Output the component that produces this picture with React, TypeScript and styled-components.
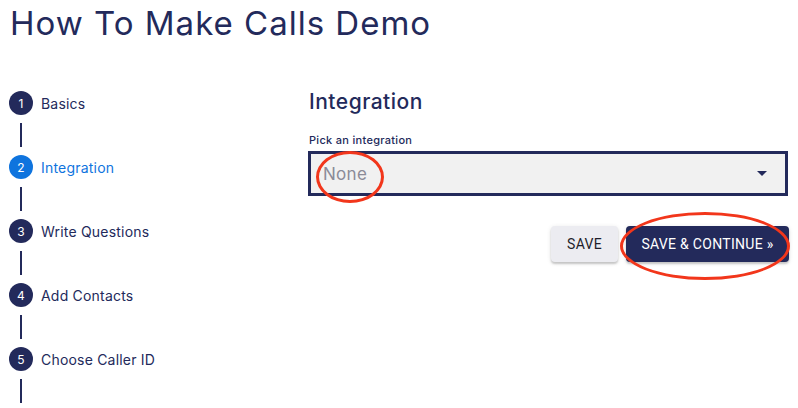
import React from 'react';
import styled, { createGlobalStyle } from 'styled-components';

const navy = '#232a5b';
const blue = '#0f74de';
const annotation = '#f2361b';

const GlobalStyle = createGlobalStyle`
  body {
    margin: 0;
    background: #fff;
    font-family: Inter, "DejaVu Sans", sans-serif;
    color: ${navy};
  }
`;

const steps = ['Basics', 'Integration', 'Write Questions', 'Add Contacts', 'Choose Caller ID'];

export default function App() {
  return (
    <Page>
      <GlobalStyle />
      <Title>How To Make Calls Demo</Title>
      <Body>
        <Stepper>
          {steps.map((label, i) => (
            <Step key={label}>
              <StepRow>
                <Circle $active={i === 1}>{i + 1}</Circle>
                <StepLabel $active={i === 1}>{label}</StepLabel>
              </StepRow>
              <Connector />
            </Step>
          ))}
        </Stepper>
        <Content>
          <Heading>Integration</Heading>
          <FieldLabel>Pick an integration</FieldLabel>
          <Select>
            <SelectValue>None</SelectValue>
            <svg width="10" height="5" viewBox="0 0 10 5">
              <path d="M0 0 L10 0 L5 5 Z" fill={navy} />
            </svg>
            <Ring style={{ left: 5, top: -3, width: 68, height: 52 }} />
          </Select>
          <Actions>
            <SaveButton>Save</SaveButton>
            <ContinueButton>
              Save &amp; Continue »
              <Ring style={{ left: -6, top: -14, width: 170, height: 68 }} />
            </ContinueButton>
          </Actions>
        </Content>
      </Body>
    </Page>
  );
}

const Page = styled.div`
  padding: 0 10px;
  width: 798px;
  height: 408px;
  box-sizing: border-box;
  overflow: hidden;
`;

const Title = styled.h1`
  margin: 0;
  padding-top: 4px;
  font-size: 33px;
  font-weight: 400;
  line-height: 38px;
  letter-spacing: 1px;
  color: ${navy};
`;

const Body = styled.div`
  display: flex;
  margin-top: 49px;
`;

const Stepper = styled.div`
  width: 299px;
  display: flex;
  flex-direction: column;
  margin-left: -1px;
`;

const Step = styled.div`
  display: flex;
  flex-direction: column;
`;

const StepRow = styled.div`
  display: flex;
  align-items: center;
  height: 24px;
`;

const Circle = styled.div<{ $active: boolean }>`
  width: 24px;
  height: 24px;
  border-radius: 50%;
  background: ${p => (p.$active ? blue : navy)};
  color: #fff;
  font-size: 12px;
  display: flex;
  align-items: center;
  justify-content: center;
`;

const StepLabel = styled.span<{ $active: boolean }>`
  margin-left: 8px;
  font-size: 14px;
  letter-spacing: 0.2px;
  color: ${p => (p.$active ? blue : navy)};
`;

const Connector = styled.div`
  width: 1.5px;
  height: 24px;
  margin: 8px 0 8px 11px;
  background: ${navy};
`;

const Content = styled.div`
  flex: 1;
  display: flex;
  flex-direction: column;
  margin-top: -3px;
`;

const Heading = styled.h2`
  margin: 0 0 0 1px;
  font-size: 21px;
  font-weight: 500;
  line-height: 28px;
  letter-spacing: 0.5px;
`;

const FieldLabel = styled.div`
  margin: 17px 0 0 1px;
  font-size: 11px;
  font-weight: 500;
  line-height: 14px;
  letter-spacing: 0.3px;
`;

const Select = styled.div`
  position: relative;
  margin-top: 4px;
  height: 45px;
  box-sizing: border-box;
  border: 3px solid ${navy};
  background: #f1f1f1;
  display: flex;
  align-items: center;
  justify-content: space-between;
  padding: 0 18px 0 12px;
`;

const SelectValue = styled.span`
  font-size: 17px;
  letter-spacing: 0.3px;
  color: #8b8b98;
`;

const Actions = styled.div`
  display: flex;
  justify-content: flex-end;
  gap: 8px;
  margin-top: 30px;
  margin-right: -1px;
`;

const BaseButton = styled.button`
  position: relative;
  height: 36px;
  border: none;
  border-radius: 4px;
  font-family: Roboto, sans-serif;
  font-size: 14px;
  font-weight: 400;
  letter-spacing: 0.3px;
  text-transform: uppercase;
  white-space: nowrap;
  padding: 0;
  box-shadow: 0 2px 2px rgba(0, 0, 0, 0.18), 0 1px 5px rgba(0, 0, 0, 0.1);
`;

const SaveButton = styled(BaseButton)`
  width: 67px;
  background: #ececf1;
  color: #1e1e2a;
`;

const ContinueButton = styled(BaseButton)`
  width: 163px;
  background: ${navy};
  color: #fff;
`;

const Ring = styled.span`
  position: absolute;
  box-sizing: border-box;
  border: 3px solid ${annotation};
  border-radius: 50%;
  pointer-events: none;
`;
